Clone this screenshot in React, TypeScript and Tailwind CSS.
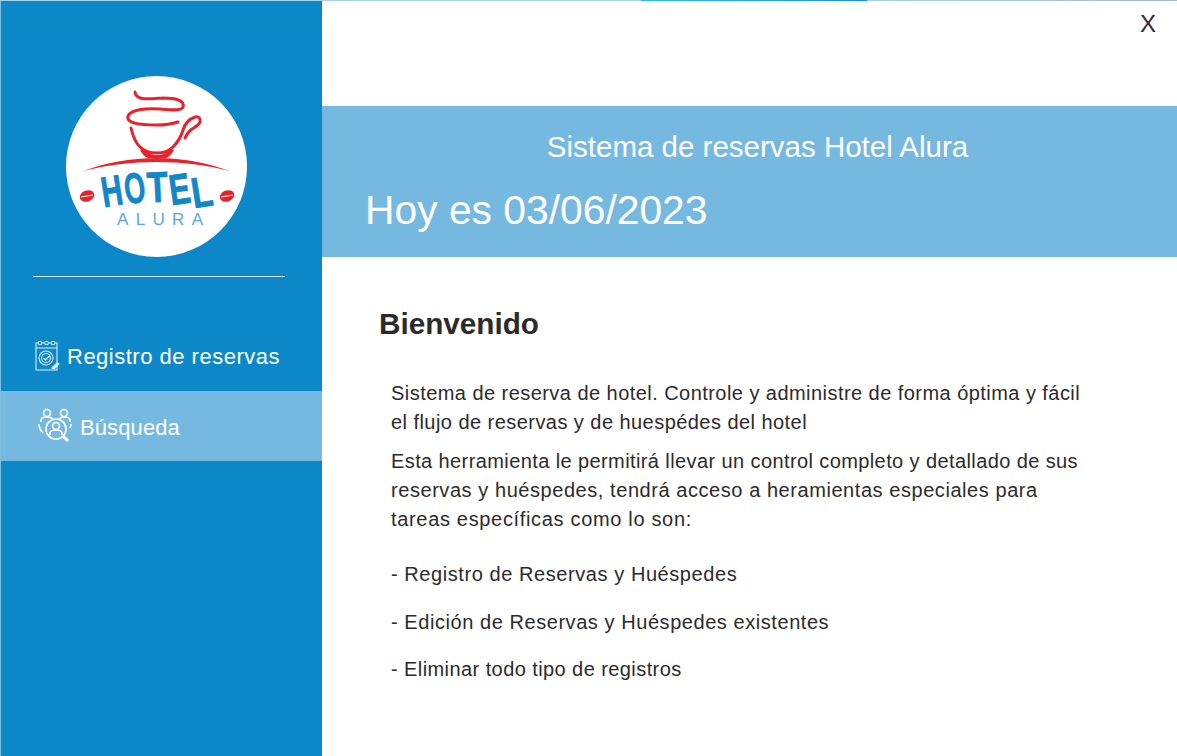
const HotelLogo = () => {
	const letters = [
		{ c: "H", x: 35, y: 130, r: -9 },
		{ c: "O", x: 58, y: 127, r: -8 },
		{ c: "T", x: 81, y: 126, r: -3 },
		{ c: "E", x: 103, y: 128, r: -8 },
		{ c: "L", x: 125, y: 131, r: -9 },
	];
	return (
		<div className="w-[181px] h-[181px] rounded-full bg-white">
			<svg viewBox="0 0 181 181" width="181" height="181">
				<g fill="none" stroke="#e8212a" strokeLinecap="round">
					<path d="M69 16c1 9 13 7 28 6 12 0 22 2 20 9-1 4-10 3-23 2-12-1-29 0-32 7-2 7 10 9 29 9 8 0 15-1 21-3" strokeWidth="3" />
					<path d="M65 52c2 9 5 15 9 19 5 5 11 6 17 6 7 0 12-2 16-6 5-5 8-10 10-17 2-6 6-11 12-13 4-1 6 2 5 5-1 3-5 5-8 7-3 2-5 5-7 9" strokeWidth="3" />
				</g>
				<path d="M78 73c5 5 9 6 13 6s9-1 13-6l4 1c-3 5-5 7-8 8H82c-3-1-5-3-8-8z" fill="#e8212a" />
				<path d="M17 95c22-8 48-13 74-13 26 0 50 5 73 13-24-6-48-9-73-9-25 0-50 3-74 9z" fill="#e8212a" />
				<g fill="#e8212a">
					<ellipse cx="21" cy="120" rx="7.5" ry="5.5" transform="rotate(-20 21 120)" />
					<ellipse cx="161" cy="120" rx="7.5" ry="5.5" transform="rotate(-20 161 120)" />
				</g>
				<path d="M15 121l12-2M155 121l12-2" stroke="#fff" strokeWidth="1.2" />
				{letters.map((l) => (
					<text
						key={l.c}
						x={l.x}
						y={l.y}
						fill="#1186c9"
						stroke="#1186c9"
						strokeWidth="0.8"
						fontSize="43"
						fontWeight="700"
						fontFamily="'Liberation Sans', sans-serif"
						textLength="21"
						lengthAdjust="spacingAndGlyphs"
						transform={`rotate(${l.r} ${l.x + 10} ${l.y - 16})`}
					>
						{l.c}
					</text>
				))}
				<text
					x="51"
					y="149"
					fill="#5aa9dc"
					fontSize="17"
					fontFamily="'Liberation Sans', sans-serif"
					textLength="86"
					lengthAdjust="spacing"
				>
					ALURA
				</text>
			</svg>
		</div>
	);
};

const NotepadIcon = () => (
	<svg width="26" height="32" viewBox="0 0 26 32" fill="none" stroke="#d8ecf8" strokeWidth="1.1">
		<path d="M2 3h21v27H2zM2 8h21" />
		<circle cx="6" cy="3" r="1.8" fill="#0c88c8" />
		<circle cx="12.5" cy="3" r="1.8" fill="#0c88c8" />
		<circle cx="19" cy="3" r="1.8" fill="#0c88c8" />
		<circle cx="12" cy="18" r="7" />
		<circle cx="12" cy="18" r="4.5" />
		<path d="M9.5 18l2 2 4-4" strokeWidth="1.4" />
		<path d="M18 28l5-5 2 1-5 5z" fill="#d8ecf8" />
	</svg>
);

const PeopleSearchIcon = () => (
	<svg width="34" height="36" viewBox="0 0 34 36" fill="none" stroke="#fff" strokeWidth="1.6">
		<circle cx="9" cy="5" r="3.5" />
		<path d="M3 14v-2c0-2 2-3 6-3s5 1 6 2" />
		<circle cx="26" cy="5" r="3.5" />
		<path d="M21 11c1-1 2-2 5-2s6 1 6 3v2" />
		<circle cx="18" cy="21" r="10" />
		<circle cx="18" cy="18" r="3.5" />
		<path d="M12 27v-2c0-2 2-3 6-3s6 1 6 3v2" />
		<path d="M25 28l5 5" strokeWidth="3" />
		<path d="M1 16c0 4 2 7 4 9M33 16c0 2-.5 3-1 4" />
	</svg>
);

const App = () => {
	return (
		<div className="w-[1177px] h-[756px] flex flex-col overflow-hidden bg-white font-['Liberation_Sans',Arial,sans-serif] text-[#2b2b2b]">
			<div className="h-px shrink-0 bg-[linear-gradient(90deg,#a9d2e8_0%,#a9d2e8_54.5%,#35b8f5_54.5%,#1f8cf0_73.7%,#a9cfe0_73.7%,#9dbfd6_100%)]" />
			<div className="flex flex-1">
				<aside className="w-[322px] bg-[#0c88c8] border-l border-[#7fbfe3] flex flex-col">
					<div className="pt-[75px] pl-[65px]">
						<HotelLogo />
					</div>
					<div className="mt-[19px] ml-[32px] w-[252px] h-px bg-[#d5eaf6]" />
					<nav className="mt-[44px]">
						<div className="h-[70px] flex items-center pl-[33px] gap-[7px] text-white text-[22px]">
							<NotepadIcon />
							<span className="tracking-[0.5px]">Registro de reservas</span>
						</div>
						<div className="h-[70px] flex items-center pl-[37px] gap-[8px] text-white text-[22px] bg-[#76b9e0]">
							<PeopleSearchIcon />
							<span className="tracking-[0.1px] translate-y-[1px]">Búsqueda</span>
						</div>
					</nav>
				</aside>
				<main className="flex-1 flex flex-col">
					<div className="h-[105px] flex justify-end pt-[8px] pr-[21px]">
						<span className="text-[24px] leading-[30px]">X</span>
					</div>
					<header className="h-[151px] bg-[#76b9e0] text-white">
						<h1 className="pt-[21px] pl-[16px] text-center text-[29.5px] leading-[40px]">Sistema de reservas Hotel Alura</h1>
						<p className="mt-[20px] pl-[43px] text-[40.8px] leading-[46px]">Hoy es 03/06/2023</p>
					</header>
					<section className="pt-[49px] pl-[57px]">
						<h2 className="text-[29.7px] leading-[36px] font-bold">Bienvenido</h2>
						<div className="mt-[37px] pl-[12px] w-[760px] text-[20px] leading-[29px] tracking-[0.45px]">
							<p>Sistema de reserva de hotel. Controle y administre de forma óptima y fácil<br />el flujo de reservas y de huespédes del hotel</p>
							<p className="mt-[10px]">
								<span className="block tracking-[0.4px]">Esta herramienta le permitirá llevar un control completo y detallado de sus</span>
								<span className="block tracking-[0.56px]">reservas y huéspedes, tendrá acceso a heramientas especiales para</span>
								<span className="block tracking-[0.67px]">tareas específicas como lo son:</span>
							</p>
							<ul className="mt-[26px] flex flex-col gap-[18.5px]">
								<li className="tracking-[0.57px]">- Registro de Reservas y Huéspedes</li>
								<li className="tracking-[0.56px]">- Edición de Reservas y Huéspedes existentes</li>
								<li className="tracking-[0.42px]">- Eliminar todo tipo de registros</li>
							</ul>
						</div>
					</section>
				</main>
			</div>
		</div>
	);
};

export default App;
